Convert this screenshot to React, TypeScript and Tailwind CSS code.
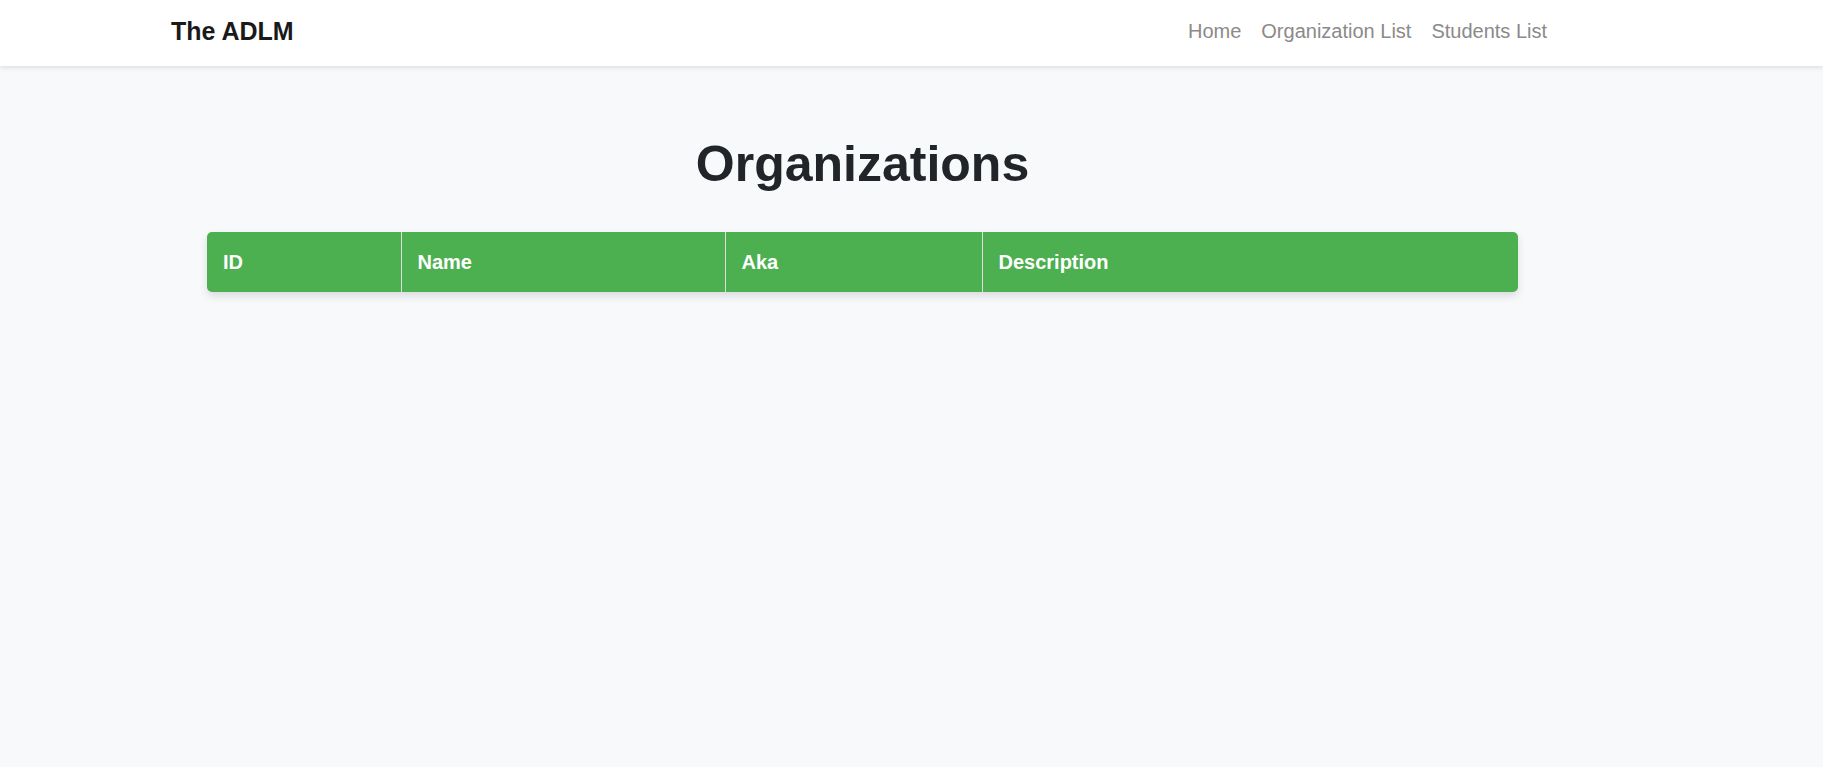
import React from 'react';

const links = ['Home', 'Organization List', 'Students List'];
const columns = [
    { label: 'ID', w: 'w-[194px]' },
    { label: 'Name', w: 'w-[324px]' },
    { label: 'Aka', w: 'w-[257px]' },
    { label: 'Description', w: 'w-[536px]' },
];

const App = () => {
    return (
        <div className="min-h-screen bg-[#f8f9fa] font-['Liberation_Sans',Arial,sans-serif]">
            <nav className="h-[66px] bg-white shadow-[0_2px_4px_rgba(0,0,0,0.1)]">
                <div className="ml-[159px] w-[1400px] h-full px-3 flex items-center justify-between">
                    <a className="text-[25px] font-bold text-[#1a1a1a] leading-none pb-1">The ADLM</a>
                    <ul className="flex gap-5">
                        {links.map(l => (
                            <li key={l}><a className="text-[20px] text-[#8a8a8a] leading-none">{l}</a></li>
                        ))}
                    </ul>
                </div>
            </nav>
            <main className="ml-[207px] w-[1311px] pt-[68px]">
                <h1 className="text-center text-[50px] leading-[60px] font-bold text-[#212529]">Organizations</h1>
                <div className="mt-[38px] rounded-[5px] overflow-hidden shadow-[0_4px_8px_rgba(0,0,0,0.12)]">
                    <table className="w-full border-collapse table-fixed">
                        <thead>
                            <tr className="bg-[#4caf50] h-[60px]">
                                {columns.map((c, i) => (
                                    <th key={c.label} className={`${c.w} px-4 text-left text-[20px] font-bold text-white ${i > 0 ? 'border-l border-[#dddddd]' : ''}`}>{c.label}</th>
                                ))}
                            </tr>
                        </thead>
                        <tbody></tbody>
                    </table>
                </div>
            </main>
        </div>
    );
};

export default App;
